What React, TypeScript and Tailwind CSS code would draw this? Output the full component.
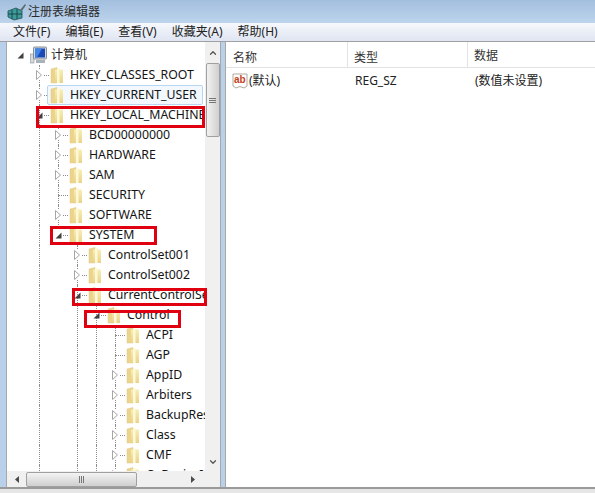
import { ChevronDown, ChevronUp } from 'lucide-react';

const FONT = 'font-["Noto_Sans","Noto_Sans_CJK_SC",sans-serif]';

const MENU_ITEMS = ['文件(F)', '编辑(E)', '查看(V)', '收藏夹(A)', '帮助(H)'];

type Node = {
  label: string;
  depth: number;
  state: 'open' | 'closed' | 'leaf';
  guides: number[];
  selected?: boolean;
};

const TREE: Node[] = [
  { label: 'HKEY_CLASSES_ROOT', depth: 1, state: 'closed', guides: [1] },
  { label: 'HKEY_CURRENT_USER', depth: 1, state: 'closed', guides: [1], selected: true },
  { label: 'HKEY_LOCAL_MACHINE', depth: 1, state: 'open', guides: [1] },
  { label: 'BCD00000000', depth: 2, state: 'closed', guides: [1, 2] },
  { label: 'HARDWARE', depth: 2, state: 'closed', guides: [1, 2] },
  { label: 'SAM', depth: 2, state: 'closed', guides: [1, 2] },
  { label: 'SECURITY', depth: 2, state: 'leaf', guides: [1, 2] },
  { label: 'SOFTWARE', depth: 2, state: 'closed', guides: [1, 2] },
  { label: 'SYSTEM', depth: 2, state: 'open', guides: [1] },
  { label: 'ControlSet001', depth: 3, state: 'closed', guides: [1, 3] },
  { label: 'ControlSet002', depth: 3, state: 'closed', guides: [1, 3] },
  { label: 'CurrentControlSet', depth: 3, state: 'open', guides: [1, 3] },
  { label: 'Control', depth: 4, state: 'open', guides: [1, 3, 4] },
  { label: 'ACPI', depth: 5, state: 'leaf', guides: [1, 3, 4, 5] },
  { label: 'AGP', depth: 5, state: 'leaf', guides: [1, 3, 4, 5] },
  { label: 'AppID', depth: 5, state: 'closed', guides: [1, 3, 4, 5] },
  { label: 'Arbiters', depth: 5, state: 'closed', guides: [1, 3, 4, 5] },
  { label: 'BackupRestore', depth: 5, state: 'closed', guides: [1, 3, 4, 5] },
  { label: 'Class', depth: 5, state: 'closed', guides: [1, 3, 4, 5] },
  { label: 'CMF', depth: 5, state: 'closed', guides: [1, 3, 4, 5] },
  { label: 'CoDeviceInstallers', depth: 5, state: 'closed', guides: [1, 3, 4, 5] },
];

function Folder() {
  return (
    <svg width="14" height="17" viewBox="0 0 14 17" className="relative shrink-0">
      <defs>
        <linearGradient id="fold" x1="0" x2="0" y1="0" y2="1">
          <stop offset="0" stopColor="#f8eeb4" />
          <stop offset="1" stopColor="#e9d38a" />
        </linearGradient>
      </defs>
      <path d="M1 2 L7 0.5 L7 16 L1 16 Z" fill="#ecd48a" stroke="#ddc88e" strokeWidth="0.5" />
      <path d="M5 2.5 L12 2.5 Q13 2.5 13 3.5 L13 16 L5 16 Z" fill="url(#fold)" />
      <rect x="7" y="1" width="2.5" height="15" fill="#fdf8d8" />
    </svg>
  );
}

function Computer() {
  return (
    <svg width="17" height="20" viewBox="0 0 17 20" className="shrink-0">
      <rect x="0.5" y="9" width="3.5" height="9" fill="#d5dade" stroke="#8b949c" strokeWidth="0.6" />
      <rect x="3.5" y="2" width="13" height="12" rx="1" fill="#cfd6dc" stroke="#6e7880" strokeWidth="0.8" />
      <rect x="5" y="3.5" width="10" height="9" fill="#1c49b8" />
      <path d="M5 3.5 H12 L7 12.5 H5 Z" fill="#3f86e6" />
      <rect x="6" y="15" width="9" height="3" fill="#aab2b8" />
    </svg>
  );
}

function Expander({ state }: { state: Node['state'] }) {
  if (state === 'open') {
    return (
      <svg width="7" height="7" viewBox="0 0 7 7" className="relative">
        <path d="M6.5 0.5 V6.5 H0.5 Z" fill="#404040" />
      </svg>
    );
  }
  if (state === 'closed') {
    return (
      <svg width="6" height="10" viewBox="0 0 6 10" className="relative bg-white">
        <path d="M0.5 0.5 L5.5 5 L0.5 9.5 Z" fill="#fff" stroke="#a6a6a6" />
      </svg>
    );
  }
  return null;
}

function Row({ node }: { node: Node }) {
  return (
    <div className="relative flex h-5 items-center whitespace-nowrap">
      {node.selected && (
        <span className="absolute left-[40px] top-0 h-5 w-[156px] rounded-[2px] border border-[#b8d6f0] bg-[#f2f8fd]" />
      )}
      {node.guides.map((g) => (
        <span
          key={g}
          className="absolute top-0 h-5 border-l border-dotted border-[#8c8c8c]"
          style={{ left: 32 + (g - 1) * 19 }}
        />
      ))}
      <span className="shrink-0" style={{ width: 27 + (node.depth - 1) * 19 }} />
      <span className="flex w-[10px] shrink-0 items-center justify-center">
        <Expander state={node.state} />
      </span>
      <span
        className={
          node.state === 'leaf'
            ? 'ml-[-5px] w-[10px] shrink-0 border-t border-dotted border-[#8c8c8c]'
            : 'w-[5px] shrink-0 border-t border-dotted border-[#8c8c8c]'
        }
      />
      <span className="ml-px flex items-center">
        <Folder />
      </span>
      <span className="relative ml-[6px] text-[#141414]">{node.label}</span>
    </div>
  );
}

function ScrollCaret({ dir }: { dir: 'left' | 'right' }) {
  return (
    <svg width="4" height="7" viewBox="0 0 4 7">
      <path d={dir === 'right' ? 'M0 0 L4 3.5 L0 7 Z' : 'M4 0 L0 3.5 L4 7 Z'} fill="#4a4a4a" />
    </svg>
  );
}

export default function App() {
  return (
    <div className={`flex h-[493px] w-[595px] flex-col overflow-hidden bg-[#b8d0ea] text-[12.3px] leading-none ${FONT}`}>
      {/* Title bar */}
      <div className="flex h-[23px] shrink-0 items-center gap-[1px] bg-gradient-to-b from-[#a3bfde] to-[#bdd4ec] pl-[7px] text-[12px] text-[#2a2a2a]">
        <svg width="20" height="18" viewBox="0 0 20 18">
          <path d="M1 8 L9 5 L15 8 L15 15 L7 17 L1 14 Z" fill="#3f9a9a" stroke="#1c4f55" strokeWidth="0.8" />
          <path d="M1 11 L15 11 M5 7 L5 16 M10 6 L10 16" stroke="#12393e" strokeWidth="0.8" />
          <path d="M13 7 L18 1 L19 2 L15 8 Z" fill="#5c6b70" />
        </svg>
        <span>注册表编辑器</span>
      </div>

      {/* Menu bar */}
      <div className="flex h-[19px] shrink-0 items-center gap-[15px] border-b border-[#a0a0a0] bg-gradient-to-b from-[#f6f8fb] to-[#dfe5f2] pl-[13px] text-[12px] text-[#222]">
        {MENU_ITEMS.map((item) => (
          <span key={item}>{item}</span>
        ))}
      </div>

      {/* Panes */}
      <div className="flex min-h-0 flex-1 pl-[6px]">
        <div className="relative flex w-[215px] shrink-0 flex-col border-l border-r border-[#a8a8a8] bg-white">
          <div className="flex min-h-0 flex-1">
            <div className="min-w-0 flex-1 overflow-hidden pt-[3px]">
              <div className="relative flex h-5 items-center whitespace-nowrap">
                <span className="w-[8px] shrink-0" />
                <span className="flex w-[10px] items-center justify-center">
                  <Expander state="open" />
                </span>
                <span className="ml-[5px]">
                  <Computer />
                </span>
                <span className="ml-[4px] text-[12px] text-[#1e1e1e]">计算机</span>
              </div>
              {TREE.map((node) => (
                <Row key={node.label} node={node} />
              ))}
            </div>
            {/* Vertical scrollbar */}
            <div className="flex w-[15px] shrink-0 flex-col items-center bg-[#f0f0f0]">
              <span className="flex h-[21px] items-center text-[#555]">
                <ChevronUp size={10} strokeWidth={3} />
              </span>
              <div className="flex h-[74px] w-[14px] flex-col items-center justify-center gap-[1px] rounded-[2px] border border-[#a0a0a0] bg-gradient-to-r from-[#f2f2f2] to-[#cfcfcf]">
                <span className="h-px w-[7px] bg-[#777]" />
                <span className="h-px w-[7px] bg-[#777]" />
                <span className="h-px w-[7px] bg-[#777]" />
              </div>
              <div className="flex-1" />
              <span className="flex h-[18px] items-center text-[#555]">
                <ChevronDown size={10} strokeWidth={3} />
              </span>
            </div>
          </div>
          {/* Horizontal scrollbar */}
          <div className="flex h-[16px] shrink-0 items-center bg-[#f0f0f0]">
            <span className="flex w-[19px] justify-center">
              <ScrollCaret dir="left" />
            </span>
            <div className="flex h-[15px] w-[111px] items-center justify-center gap-[1px] rounded-[2px] border border-[#a0a0a0] bg-gradient-to-b from-[#f4f4f4] to-[#cfcfcf]">
              <span className="h-[7px] w-px bg-[#777]" />
              <span className="h-[7px] w-px bg-[#777]" />
              <span className="h-[7px] w-px bg-[#777]" />
            </div>
            <div className="flex-1" />
            <span className="flex w-[54px] justify-center">
              <ScrollCaret dir="right" />
            </span>
          </div>

          {/* Red highlight boxes */}
          <span className="absolute left-[29px] top-[64px] h-[22px] w-[169px] border-[3px] border-[#e0000f]" />
          <span className="absolute left-[43px] top-[184px] h-[19px] w-[107px] border-[3px] border-[#e0000f]" />
          <span className="absolute left-[65px] top-[246px] h-[18px] w-[135px] border-[3px] border-[#e0000f]" />
          <span className="absolute left-[77px] top-[268px] h-[18px] w-[97px] border-[3px] border-[#e0000f]" />
        </div>

        <div className="w-[4px] shrink-0" />

        {/* Value list */}
        <div className="flex min-w-0 flex-1 flex-col border-l border-[#a8a8a8] bg-white text-[12px]">
          <div className="flex h-[26px] shrink-0 items-center border-b border-[#e3e3e3] text-[#333]">
            <span className="h-full w-[122px] border-r border-[#e3e3e3] pl-[7px] pt-[3px] leading-[25px]">名称</span>
            <span className="h-full w-[120px] border-r border-[#e3e3e3] pl-[6px] pt-[3px] leading-[25px]">类型</span>
            <span className="pl-[6px] pt-[3px]">数据</span>
          </div>
          <div className="flex h-[25px] items-center text-[#222]">
            <span className="flex w-[122px] items-center pl-[6px]">
              <svg width="16" height="16" viewBox="0 0 16 16" className="shrink-0">
                <path d="M1 1 H15 V13 L12 15 L8 13.5 L4 15 L1 13 Z" fill="#fff" stroke="#b0a8a0" />
                <text x="2" y="10" fontSize="10" fontWeight="700" fill="#c8401e" fontFamily="Liberation Sans">ab</text>
              </svg>
              <span className="ml-px">(默认)</span>
            </span>
            <span className="w-[120px] pl-[7px]">REG_SZ</span>
            <span className="pl-[7px]">(数值未设置)</span>
          </div>
        </div>
      </div>
      <div className="h-[6px] shrink-0 border-t-[2px] border-[#9a9a9a] bg-[#e6e6e6]" />
    </div>
  );
}
